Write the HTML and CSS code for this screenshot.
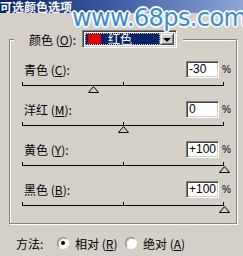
FILE: index.html
```html
<!DOCTYPE html>
<html lang="zh-cn">
<head>
    <meta charset="UTF-8" />
    <title>可选颜色选项</title>
    <link rel="stylesheet" href="styles.css">
</head>
<body>

    <div class="titlebar"><span class="title-text">可选颜色选项</span></div>
    <div class="watermark">www.68ps.com</div>

    <fieldset class="group">
        <legend class="group-legend">
            <span class="legend-label">颜色 (<u>O</u>):</span>
            <span class="select">
                <span class="select-value"><span class="swatch"></span>红色</span>
                <span class="select-btn"><span class="arrow"></span></span>
            </span>
        </legend>

        <div class="row">
            <div class="row-head">
                <span class="row-label">青色 (<u>C</u>):</span>
                <span class="field">-30</span>
                <span class="pct">%</span>
            </div>
            <div class="slider">
                <div class="ticks"><i></i><i></i><i></i></div>
                <div class="track"></div>
                <svg class="thumb" style="left: 35%" width="11" height="7" viewBox="0 0 11 7"><path d="M5.5 0.5 L10.5 6.5 L0.5 6.5 Z" fill="#d4d0c8" stroke="#000"/></svg>
            </div>
        </div>

        <div class="row">
            <div class="row-head">
                <span class="row-label">洋红 (<u>M</u>):</span>
                <span class="field">0</span>
                <span class="pct">%</span>
            </div>
            <div class="slider">
                <div class="ticks"><i></i><i></i><i></i></div>
                <div class="track"></div>
                <svg class="thumb" style="left: 50%" width="11" height="7" viewBox="0 0 11 7"><path d="M5.5 0.5 L10.5 6.5 L0.5 6.5 Z" fill="#d4d0c8" stroke="#000"/></svg>
            </div>
        </div>

        <div class="row">
            <div class="row-head">
                <span class="row-label">黄色 (<u>Y</u>):</span>
                <span class="field">+100</span>
                <span class="pct">%</span>
            </div>
            <div class="slider">
                <div class="ticks"><i></i><i></i><i></i></div>
                <div class="track"></div>
                <svg class="thumb" style="left: 100%" width="11" height="7" viewBox="0 0 11 7"><path d="M5.5 0.5 L10.5 6.5 L0.5 6.5 Z" fill="#d4d0c8" stroke="#000"/></svg>
            </div>
        </div>

        <div class="row">
            <div class="row-head">
                <span class="row-label">黑色 (<u>B</u>):</span>
                <span class="field">+100</span>
                <span class="pct">%</span>
            </div>
            <div class="slider">
                <div class="ticks"><i></i><i></i><i></i></div>
                <div class="track"></div>
                <svg class="thumb" style="left: 100%" width="11" height="7" viewBox="0 0 11 7"><path d="M5.5 0.5 L10.5 6.5 L0.5 6.5 Z" fill="#d4d0c8" stroke="#000"/></svg>
            </div>
        </div>
    </fieldset>

    <div class="method">
        <span class="method-label">方法:</span>
        <span class="option option-first"><span class="radio checked"></span><span>相对 (<u>R</u>)</span></span>
        <span class="option"><span class="radio"></span><span>绝对 (<u>A</u>)</span></span>
    </div>

</body>
</html>
```

FILE: styles.css
```css
body {
    margin: 0;
    width: 243px;
    height: 256px;
    overflow: hidden;
    position: relative;
    background-color: #d4d0c8;
    color: #000;
    font-family: "Noto Sans CJK SC", sans-serif;
    font-size: 12px;
}

.titlebar {
    height: 13px;
    background: linear-gradient(to right, #0a246a, #3a5aa0 45%, #8ea6d6);
    color: #fff;
    font-weight: bold;
    font-size: 12px;
    white-space: nowrap;
}

.title-text {
    display: block;
    line-height: 13px;
}

.watermark {
    position: absolute;
    left: 72px;
    top: 4px;
    font-family: "DejaVu Sans", sans-serif;
    font-size: 24px;
    line-height: 28px;
    letter-spacing: -0.6px;
    color: #3b8ad6;
    text-shadow:
        1px 0 #fff, -1px 0 #fff, 0 1px #fff, 0 -1px #fff,
        1px 1px #fff, -1px -1px #fff, 1px -1px #fff, -1px 1px #fff,
        2px 0 #e8f2fb, -2px 0 #e8f2fb, 0 2px #e8f2fb, 0 -2px #e8f2fb;
}

.group {
    margin: 17px 6px 0 9px;
    padding: 13px 12px 2px 12px;
    border: 1px solid #808080;
    box-shadow: inset 1px 1px 0 #fff, 1px 1px 0 #fff;
}

.group-legend {
    margin-left: -8px;
    padding: 0 6px 0 15px;
    background-color: #d4d0c8;
    display: flex;
    align-items: center;
}

.legend-label {
    width: 53px;
}

.select {
    display: flex;
    width: 95px;
    height: 18px;
    box-sizing: border-box;
    padding: 2px;
    background-color: #fff;
    border: 1px solid;
    border-color: #808080 #fff #fff #808080;
    box-shadow: inset 1px 1px 0 #404040, inset -1px -1px 0 #d4d0c8;
}

.select-value {
    flex: 1;
    display: flex;
    align-items: center;
    gap: 7px;
    padding-left: 2px;
    background-color: #0a246a;
    border: 1px dotted #c8c8c8;
    color: #fff;
    line-height: 12px;
}

.swatch {
    width: 13px;
    height: 10px;
    background-color: #e00000;
}

.select-btn {
    width: 14px;
    box-sizing: border-box;
    display: flex;
    align-items: center;
    justify-content: center;
    background-color: #d4d0c8;
    border: 1px solid;
    border-color: #d4d0c8 #404040 #404040 #d4d0c8;
    box-shadow: inset 1px 1px 0 #fff, inset -1px -1px 0 #808080;
}

.arrow {
    width: 0;
    height: 0;
    border-left: 4px solid transparent;
    border-right: 4px solid transparent;
    border-top: 4px solid #000;
    margin-top: 1px;
}

.row {
    height: 40px;
}

.row-head {
    display: flex;
    align-items: center;
    height: 17px;
    margin-right: -7px;
}

.row-label {
    flex: 1;
    padding-left: 2px;
}

.field {
    width: 33px;
    height: 17px;
    box-sizing: border-box;
    padding-left: 2px;
    background-color: #fff;
    border: 1px solid;
    border-color: #808080 #fff #fff #808080;
    box-shadow: inset 1px 1px 0 #404040, inset -1px -1px 0 #d4d0c8;
    font-family: "Liberation Sans", sans-serif;
    font-size: 12px;
    line-height: 15px;
}

.pct {
    width: 9px;
    margin-left: 3px;
    font-family: "Liberation Sans", sans-serif;
    font-size: 10px;
}

.slider {
    position: relative;
    padding-top: 4px;
}

.ticks {
    display: flex;
    justify-content: space-between;
    height: 3px;
}

.ticks i {
    width: 1px;
    background-color: #000;
}

.track {
    height: 1px;
    background-color: #000;
}

.thumb {
    position: absolute;
    top: 8px;
    margin-left: -5px;
}

.method {
    display: flex;
    align-items: center;
    height: 16px;
    margin-top: 11px;
    padding-left: 16px;
    white-space: nowrap;
}

.method-label {
    width: 41px;
    flex-shrink: 0;
}

.option {
    display: flex;
    align-items: center;
    gap: 6px;
    flex-shrink: 0;
}

.option-first {
    width: 68px;
}

.radio {
    position: relative;
    width: 12px;
    height: 12px;
    box-sizing: border-box;
    border-radius: 50%;
    background-color: #fff;
    border: 1px solid;
    border-color: #808080 #fff #fff #808080;
    box-shadow: inset 1px 1px 0 #c0c0c0;
}

.radio.checked::after {
    content: "";
    position: absolute;
    left: 3px;
    top: 3px;
    width: 4px;
    height: 4px;
    border-radius: 50%;
    background-color: #000;
}
```
